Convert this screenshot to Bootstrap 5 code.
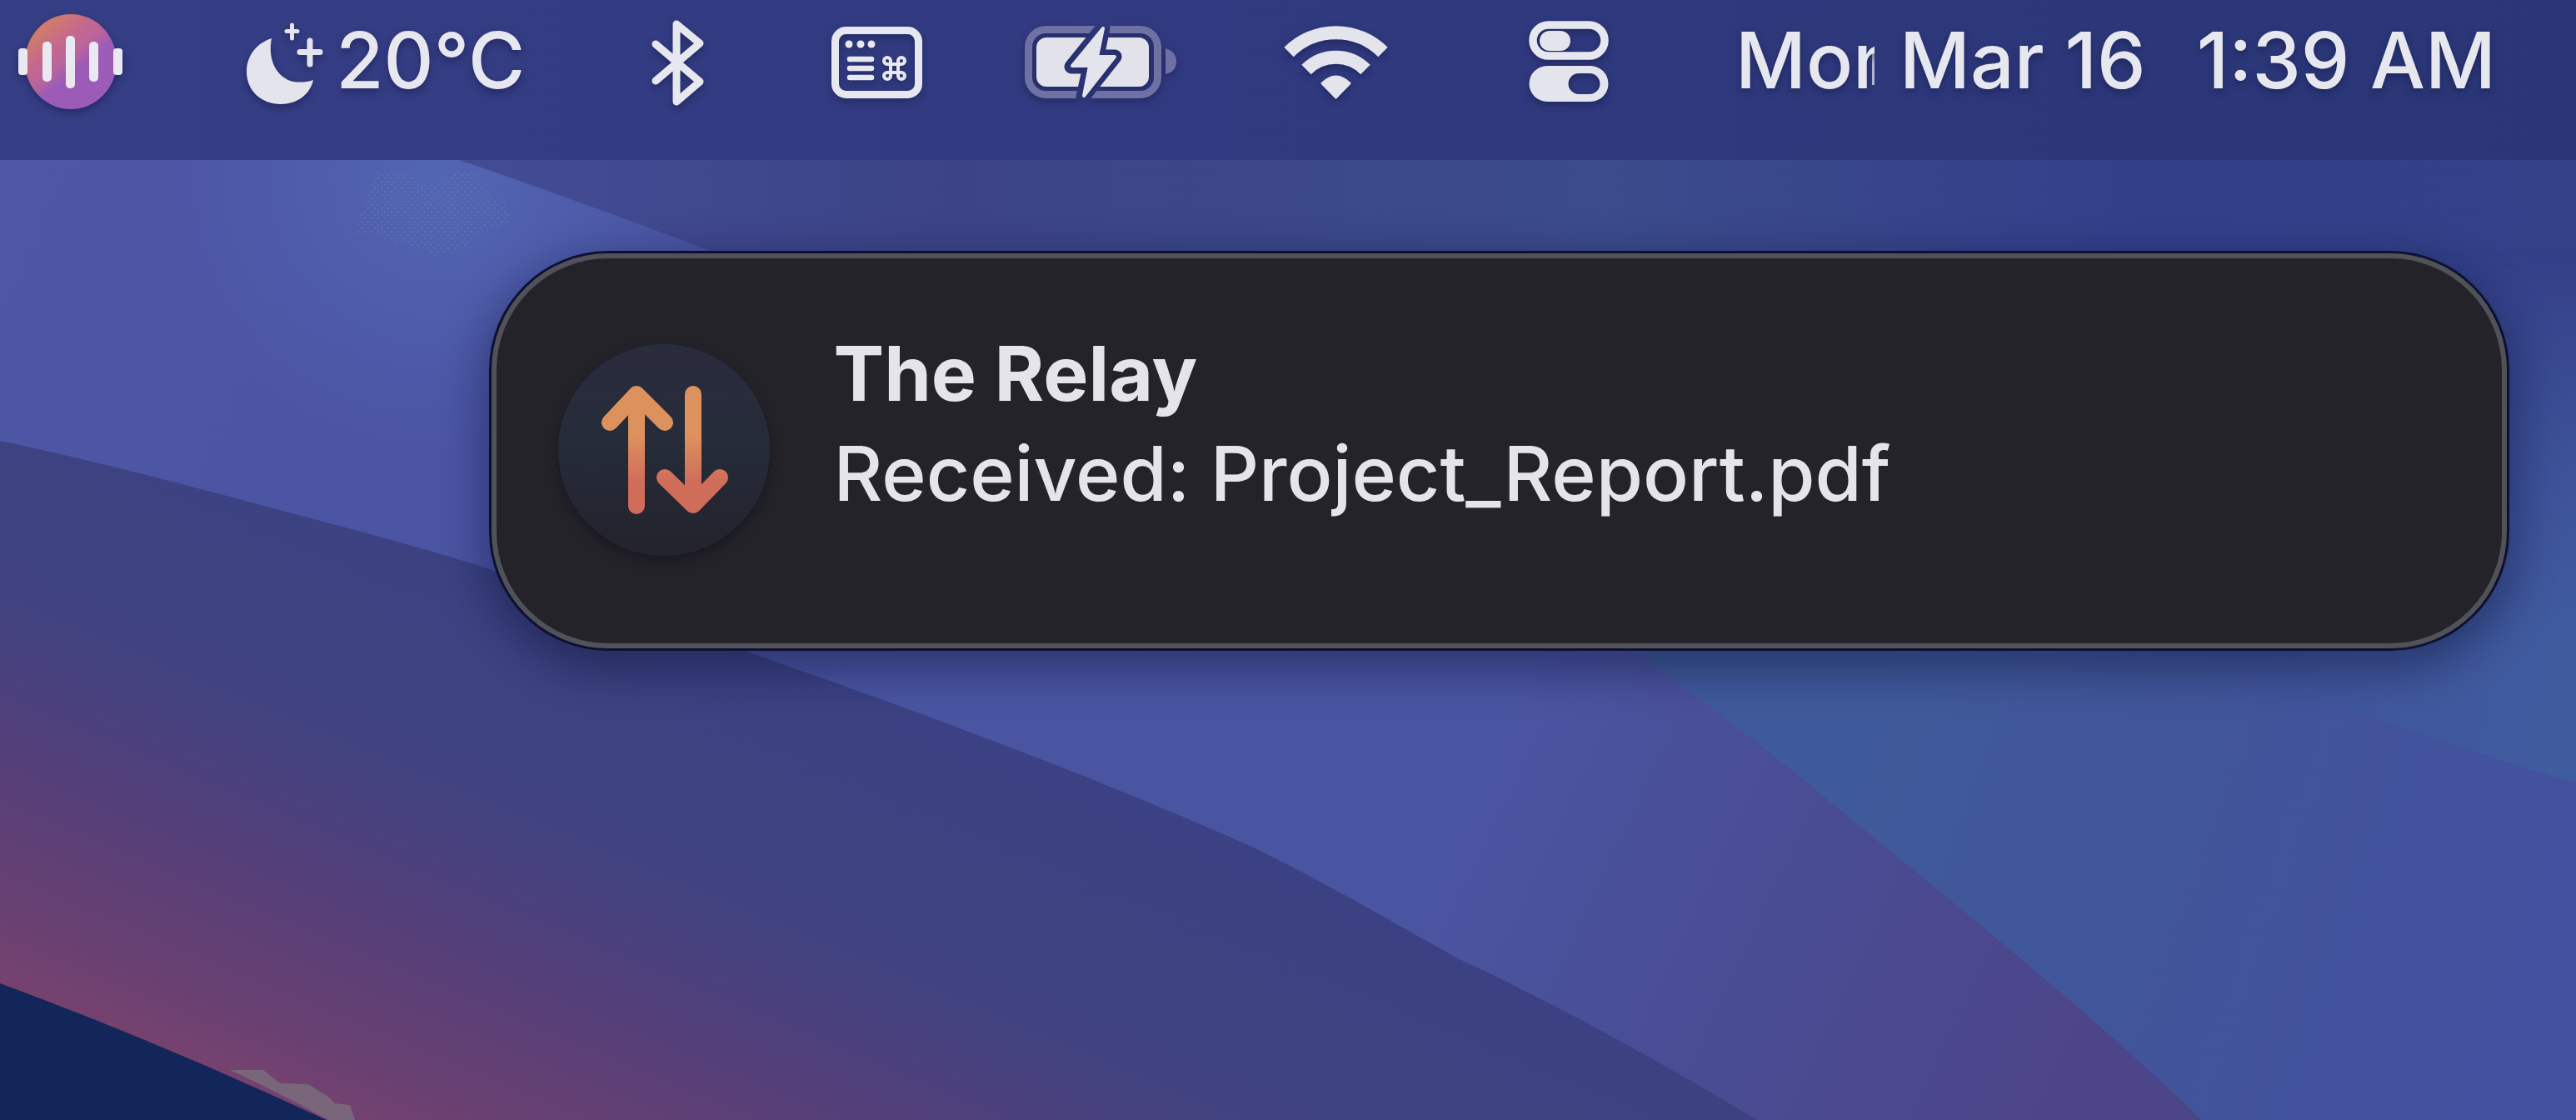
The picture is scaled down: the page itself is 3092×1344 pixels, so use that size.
<!DOCTYPE html>
<html lang="en">
<head>
<meta charset="utf-8">
<meta name="viewport" content="width=device-width, initial-scale=1">
<title>The Relay</title>
<link href="https://cdn.jsdelivr.net/npm/bootstrap@5.3.0/dist/css/bootstrap.min.css" rel="stylesheet">
<style>
  body { font-family: Inter, "Liberation Sans", sans-serif; background: #3d4380; color: #e4e5ec; overflow-x: hidden; }
  .desktop { min-height: 100vh; isolation: isolate; }
  .wallpaper { inset: 0; z-index: -1; }
  .menu-bar { height: 192px; padding: 14px 96px 0 22px; background: linear-gradient(90deg, #363e85, #313a80 45%, #2a3676); }
  .menu-item { height: 120px; font-size: 93px; font-weight: 500; line-height: 116px; color: #e7e8ef; text-shadow: 0 4px 8px rgba(20, 24, 70, .5); }
  .menu-item svg { filter: drop-shadow(0 4px 5px rgba(20, 24, 70, .5)); }
  .weather { gap: 14px; padding-right: 12px; }
  .clock { gap: 30px; }
  .weekday { width: 167px; background: linear-gradient(#b4b8d4, #b4b8d4) no-repeat 100% 46px / 3px 42px; }
  .clock-time { margin-left: 31px; }
  .alert-area { padding: 109px 80px 80px 19vw; }
  .alert-card { border: 6px solid #515159; border-radius: 140px; background: #232329; color: #e4e4ea; box-shadow: 0 0 0 3px #0d1030, 0 18px 50px 10px rgba(10, 14, 50, .42); margin: 3px; }
  .alert-body { padding: 78px 74px 105px; gap: 76px; }
  .app-disc { width: 254px; height: 254px; margin-top: 25px; background: linear-gradient(#2a2b3d, #262c3a 45%, #23242e 90%); box-shadow: 0 6px 14px rgba(20, 18, 30, .6); }
  .alert-text { font-size: 91px; font-weight: 500; line-height: 120px; }
</style>
</head>
<body>
<div class="desktop position-relative">
  <svg class="wallpaper position-absolute w-100 h-100" viewBox="0 0 3092 1344" preserveAspectRatio="none" aria-hidden="true">
    <defs>
      <linearGradient id="skyTop" x1="500" y1="0" x2="3092" y2="0" gradientUnits="userSpaceOnUse">
        <stop offset="0" stop-color="#444c96"/><stop offset=".25" stop-color="#3c4487"/><stop offset=".55" stop-color="#3b4b8b"/><stop offset=".8" stop-color="#343f8a"/><stop offset="1" stop-color="#344088"/>
      </linearGradient>
      <linearGradient id="skyLow" x1="2250" y1="850" x2="3092" y2="1150" gradientUnits="userSpaceOnUse">
        <stop offset="0" stop-color="#3f5a9a"/><stop offset=".45" stop-color="#41559a"/><stop offset="1" stop-color="#4450a0"/>
      </linearGradient>
      <linearGradient id="skyFade" x1="0" y1="300" x2="0" y2="780" gradientUnits="userSpaceOnUse">
        <stop offset="0" stop-color="#fff" stop-opacity="0"/><stop offset="1" stop-color="#fff"/>
      </linearGradient>
      <mask id="skyMask"><rect width="3092" height="1344" fill="url(#skyFade)"/></mask>
      <linearGradient id="glow" x1="2650" y1="700" x2="3092" y2="800" gradientUnits="userSpaceOnUse">
        <stop offset="0" stop-color="#3f5c9e" stop-opacity="0"/><stop offset="1" stop-color="#3f5c9e"/>
      </linearGradient>
      <linearGradient id="ribbon" x1="0" y1="200" x2="2450" y2="1344" gradientUnits="userSpaceOnUse">
        <stop offset="0" stop-color="#4e56a6"/><stop offset=".3" stop-color="#4a54a2"/><stop offset=".7" stop-color="#4a55a2"/><stop offset=".86" stop-color="#494c93"/><stop offset="1" stop-color="#4d458a"/>
      </linearGradient>
      <radialGradient id="ribbonLight" cx="530" cy="215" r="330" gradientUnits="userSpaceOnUse">
        <stop offset="0" stop-color="#5266b4"/><stop offset="1" stop-color="#5062b0" stop-opacity="0"/>
      </radialGradient>
      <linearGradient id="dusk" x1="150" y1="1235" x2="421" y2="590" gradientUnits="userSpaceOnUse">
        <stop offset="0" stop-color="#75426f"/><stop offset=".1" stop-color="#694071"/><stop offset=".36" stop-color="#543f79"/><stop offset=".5" stop-color="#48417e"/><stop offset=".62" stop-color="#404380"/><stop offset="1" stop-color="#3b4182"/>
      </linearGradient>
      <pattern id="grain" width="8" height="8" patternUnits="userSpaceOnUse">
        <circle cx="2" cy="2" r="1" fill="#7f8c98"/><circle cx="6" cy="6" r="1" fill="#7f8c98"/>
      </pattern>
    </defs>
    <rect width="3092" height="1344" fill="url(#skyTop)"/>
    <rect width="3092" height="1344" fill="url(#skyLow)" mask="url(#skyMask)"/>
    <path d="M2640 780Q2860 870 3092 940V300H2640Z" fill="url(#glow)" mask="url(#skyMask)"/>
    <path d="M0 192H551C640 222 760 266 850 300C1250 450 1650 600 1960 780C2100 878 2200 965 2292 1040S2560 1260 2642 1344H0Z" fill="url(#ribbon)"/>
    <path d="M0 192H551C640 222 760 266 850 300L880 560H0Z" fill="url(#ribbonLight)"/>
    <path d="M0 529C130 556 260 592 396 628C480 650 540 668 591 684C720 722 840 760 947 800C1150 870 1350 948 1500 1015C1600 1063 1680 1112 1754 1152C1870 1206 2000 1278 2109 1344H0Z" fill="url(#dusk)"/>
    <path d="M0 1180Q190 1250 392 1344H0Z" fill="#13265a"/>
    <path d="M276 1284h40l20 16 34 1 24 15 8 8 18 2 6 18h-32l-40-22-40-20z" fill="#79667a"/>
    <path d="M452 206h40l18 16h20l18-20 20 4 16 22 20 14 13 26-30 4-30 24-20 6-16 6-16-12-34-4-24-12-22 4 12-40z" fill="url(#grain)" opacity=".45"/>
  </svg>

  <nav class="menu-bar navbar align-items-start flex-nowrap" aria-label="Menu bar">
    <div class="menu-item d-flex">
      <svg width="137" height="120" viewBox="22 14 137 120" role="img" aria-label="Voice">
        <defs><linearGradient id="voice" x1="45" y1="35" x2="110" y2="115" gradientUnits="userSpaceOnUse">
          <stop offset="0" stop-color="#d07d66"/><stop offset=".3" stop-color="#c5688e"/><stop offset=".5" stop-color="#b8649c"/><stop offset=".65" stop-color="#9d5bb8"/><stop offset="1" stop-color="#9d5bb8"/>
        </linearGradient></defs>
        <ellipse cx="85" cy="74" rx="55" ry="57" fill="url(#voice)"/>
        <g fill="#e9e9f2"><rect x="22" y="58" width="11" height="32" rx="4"/><rect x="51" y="50" width="11" height="48" rx="5"/><rect x="79" y="43" width="11" height="63" rx="5"/><rect x="107" y="50" width="11" height="48" rx="5"/><rect x="136" y="58" width="11" height="32" rx="4"/></g>
      </svg>
    </div>
    <div class="menu-item weather d-flex">
      <svg width="107" height="120" viewBox="281 14 107 120" role="img" aria-label="Clear night">
        <path d="M325 46C306 52 295 68 295 86C295 109 313 125 336 125C355 125 371 114 375 96C367 99 358 99 351 98C331 93 320 72 325 46Z" fill="#e4e5ec"/>
        <g stroke="#e4e5ec" stroke-linecap="round"><path d="M349.500 30V46M343 37.500H356" stroke-width="5"/><path d="M371 49V77M359 62.500H383" stroke-width="7"/></g>
      </svg>
      <span>20°C</span>
    </div>
    <div class="menu-item d-flex">
      <svg width="97" height="120" viewBox="764 14 97 120" role="img" aria-label="Bluetooth">
        <path d="M786 53L839 98L811 122V29L839 52L786 97" fill="none" stroke="#e7e8ef" stroke-width="9" stroke-linecap="round" stroke-linejoin="round"/>
      </svg>
    </div>
    <div class="menu-item d-flex">
      <svg width="121" height="120" viewBox="985 14 121 120" role="img" aria-label="Input source">
        <rect x="1001.500" y="36.500" width="100" height="77" rx="13" fill="none" stroke="#e7e8ef" stroke-width="9"/>
        <g fill="#e7e8ef"><circle cx="1018" cy="53" r="4.500"/><circle cx="1032" cy="53" r="4.500"/><circle cx="1045" cy="53" r="4.500"/></g>
        <path d="M1019 71H1045M1019 82H1045M1019 93H1045" stroke="#e7e8ef" stroke-width="6.500" stroke-linecap="round"/>
        <path d="M1068 77h-4a4 4 0 1 1 4-4v18a4 4 0 1 1-4-4h17a4 4 0 1 1-4 4v-18a4 4 0 1 1 4 4z" fill="none" stroke="#e7e8ef" stroke-width="4"/>
      </svg>
    </div>
    <div class="menu-item d-flex">
      <svg width="182" height="120" viewBox="1230 14 182 120" role="img" aria-label="Battery charging">
        <defs><mask id="boltGap"><rect x="1220" y="0" width="200" height="140" fill="#fff"/><path d="M1324 33L1286 80H1308L1300 116L1338 68H1317Z" fill="#000" stroke="#000" stroke-width="17" stroke-linejoin="round"/></mask></defs>
        <g mask="url(#boltGap)"><rect x="1234.500" y="35.500" width="155" height="78" rx="21" fill="none" stroke="#6f70a3" stroke-width="9"/>
        <rect x="1244" y="45" width="135" height="59" rx="12" fill="#e2e3ea"/></g>
        <path d="M1399 58Q1412 62 1412 74T1399 89Z" fill="#6f70a3"/>
        <path d="M1324 34L1287 79H1308L1301 115L1338 68H1317Z" fill="#e4e5ec" stroke="#e4e5ec" stroke-width="4" stroke-linejoin="round"/>
      </svg>
    </div>
    <div class="menu-item d-flex">
      <svg width="138" height="120" viewBox="1536 14 138 120" role="img" aria-label="Wi-Fi">
        <path d="M1548 62.500A80 80 0 0 1 1661 62.500M1569 83.500A50 50 0 0 1 1640 83.500" fill="none" stroke="#e4e5ec" stroke-width="16"/>
        <path d="M1604.500 117L1588 100Q1604.500 84 1621 100Z" fill="#e4e5ec" stroke="#e4e5ec" stroke-width="3" stroke-linejoin="round"/>
      </svg>
    </div>
    <div class="menu-item d-flex">
      <svg width="163" height="120" viewBox="1798 14 163 120" role="img" aria-label="Control Center">
        <rect x="1841" y="30" width="86" height="37" rx="18.500" fill="none" stroke="#e7e8ef" stroke-width="9.500"/>
        <rect x="1849" y="37" width="37" height="24" rx="12" fill="#e4e5ec"/>
        <path fill-rule="evenodd" fill="#e4e5ec" d="M1858 79H1910a21.500 21.500 0 0 1 0 43H1858a21.500 21.500 0 0 1 0-43ZM1896 88a12.500 12.500 0 0 0 0 25H1909a12.500 12.500 0 0 0 0-25Z"/>
      </svg>
    </div>
    <div class="menu-item clock d-flex text-nowrap">
      <span class="weekday overflow-hidden">Mon</span><span>Mar 16</span><span class="clock-time">1:39 AM</span>
    </div>
  </nav>

  <main class="alert-area">
    <div class="alert-card card" role="status">
      <div class="alert-body card-body d-flex align-items-start">
        <div class="app-disc rounded-circle flex-shrink-0">
          <svg class="d-block" width="254" height="254" viewBox="670 413 254 254" role="img" aria-label="The Relay">
            <defs><linearGradient id="swap" x1="0" y1="463" x2="0" y2="617" gradientUnits="userSpaceOnUse">
              <stop offset="0" stop-color="#dd925e"/><stop offset=".38" stop-color="#dd925e"/><stop offset=".75" stop-color="#d06c5a"/><stop offset="1" stop-color="#d06c5a"/>
            </linearGradient></defs>
            <path d="M764 473V607M732 507L764 473L798 507M832 473V606M798 573L832 606L864 573" fill="none" stroke="url(#swap)" stroke-width="20" stroke-linecap="round" stroke-linejoin="round"/>
          </svg>
        </div>
        <div class="alert-text">
          <div class="fw-bold">The Relay</div>
          <div>Received: Project_Report.pdf</div>
        </div>
      </div>
    </div>
  </main>
</div>
<script src="https://cdn.jsdelivr.net/npm/bootstrap@5.3.0/dist/js/bootstrap.bundle.min.js"></script>
</body>
</html>
